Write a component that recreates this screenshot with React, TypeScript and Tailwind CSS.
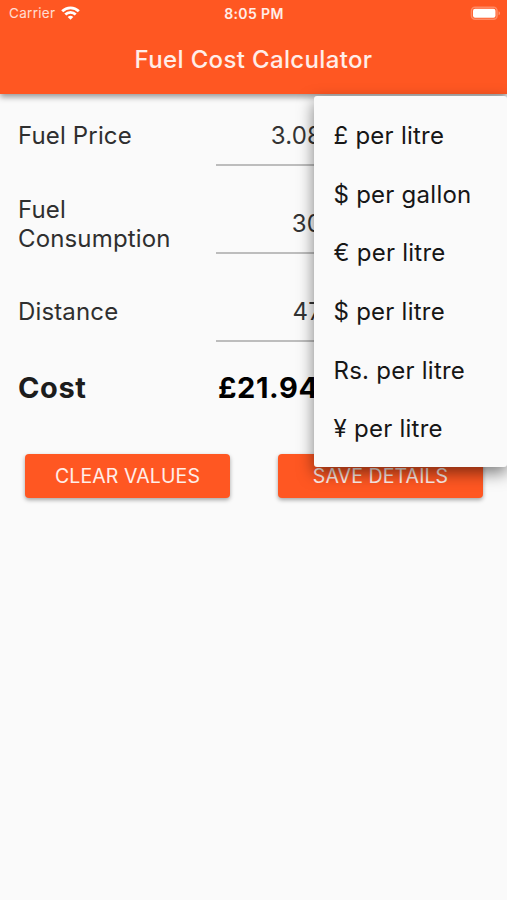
import { useState } from "react";

const units = [
  "£ per litre",
  "$ per gallon",
  "€ per litre",
  "$ per litre",
  "Rs. per litre",
  "¥ per litre",
];

const fields = [
  { label: "Fuel Price", value: "3.08" },
  { label: "Fuel Consumption", value: "30" },
  { label: "Distance", value: "47" },
];

function StatusBar() {
  return (
    <div className="flex h-[27px] items-center text-[13.5px] leading-none">
      <div className="flex flex-1 items-center gap-[6px] pt-[1px] pl-[9px] text-white/80">
        <span className="tracking-[0.3px]">Carrier</span>
        <svg className="-mt-[2px] h-[14px] w-[19px]" viewBox="0 0 19 14" fill="none" stroke="white" strokeWidth="2.8">
          <path d="M1.2 5.2a11.8 11.8 0 0 1 16.6 0" />
          <path d="M4.3 8.5a7.4 7.4 0 0 1 10.4 0" />
          <path d="M9.5 13.8 6.7 11a4 4 0 0 1 5.6 0z" fill="white" stroke="none" />
        </svg>
      </div>
      <span className="-ml-[2px] pt-[1px] text-[14px] font-semibold tracking-[0.4px] text-white/90">8:05 PM</span>
      <div className="flex flex-1 justify-end pr-[6px]">
        <svg className="h-[15px] w-[31px]" viewBox="0 0 31 15">
          <rect x="1.5" y="1.2" width="25.5" height="12" rx="3.5" fill="none" stroke="white" strokeOpacity="0.3" strokeWidth="1.6" />
          <rect x="3" y="2.7" width="22.5" height="9" rx="2" fill="white" />
          <path d="M28.6 5.2c1.8.6 1.8 3.4 0 4z" fill="white" fillOpacity="0.4" />
        </svg>
      </div>
    </div>
  );
}

export default function App() {
  const [menuOpen, setMenuOpen] = useState(true);

  return (
    <div className="relative h-[900px] w-[507px] overflow-hidden bg-[#fafafa] font-['Inter','Liberation_Sans',sans-serif]">
      <header className="h-[94px] bg-[#ff5722] text-white shadow-[0_3px_6px_rgba(0,0,0,0.4)]">
        <StatusBar />
        <h1 className="flex h-[66px] items-center justify-center text-[24px] font-medium tracking-[0.35px] text-white/90">
          Fuel Cost Calculator
        </h1>
      </header>

      <main className="pt-3 text-[24px] tracking-[0.15px]">
        <div className="flex flex-col gap-[28px]">
          {fields.map((field) => (
            <div key={field.label} className="flex h-[60px] items-center pl-[18px]">
              <span className="w-[198px] pr-6 pb-[1px] leading-[29px] text-[#2f2f2f]">{field.label}</span>
              <div className="flex h-full w-[106px] items-center justify-end border-b-2 border-[#bdbdbd] pt-[1px] text-[#333333]">
                {field.value}
              </div>
            </div>
          ))}
        </div>

        <div className="mt-[26px] flex h-10 items-center pl-[18px] text-[29px] font-bold tracking-[0.6px]">
          <span className="w-[200px] text-[#1c1c1c]">Cost</span>
          <span className="text-black">£21.94</span>
        </div>

        {/* Butonlar */}
        <div className="mt-[46px] flex gap-[48px] pl-[25px] text-[19.5px] tracking-[0.1px] text-white/90">
          <button className="h-[44px] w-[205px] rounded-[4px] bg-[#ff5722] pt-[2px] shadow-[0_2px_4px_rgba(0,0,0,0.35)]">
            CLEAR VALUES
          </button>
          <button className="h-[44px] w-[205px] rounded-[4px] bg-[#ff5722] pt-[2px] shadow-[0_2px_4px_rgba(0,0,0,0.35)]">
            SAVE DETAILS
          </button>
        </div>
      </main>

      {/* Birim menüsü */}
      {menuOpen && (
        <ul className="absolute top-[96px] right-0 h-[371px] w-[193px] rounded-[3px] bg-[#fafafa] pt-[11px] shadow-[0_6px_16px_rgba(0,0,0,0.5)]">
          {units.map((unit) => (
            <li
              key={unit}
              onClick={() => setMenuOpen(false)}
              className="flex h-[58.6px] items-center pl-[19.5px] text-[24px] tracking-[0.25px] whitespace-nowrap text-[#161616]"
            >
              {unit}
            </li>
          ))}
        </ul>
      )}
    </div>
  );
}
